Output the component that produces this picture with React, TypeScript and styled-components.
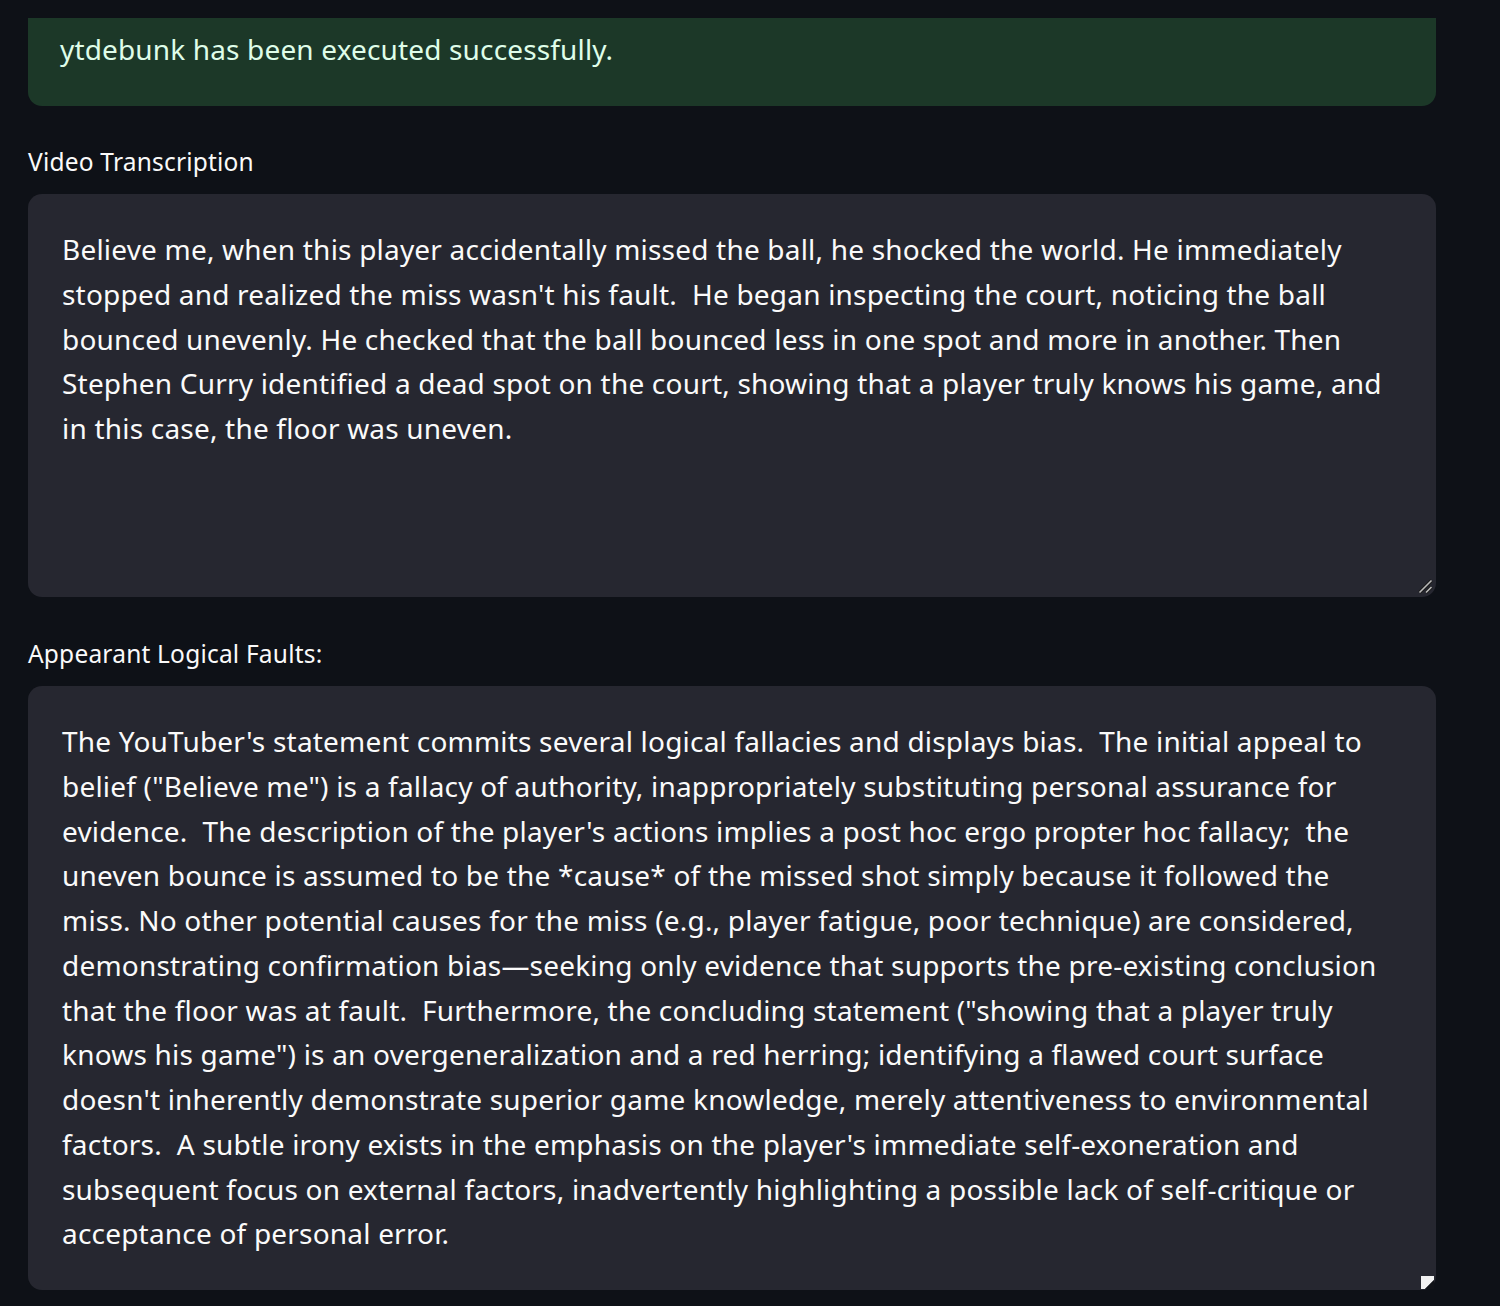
import React from "react";
import styled, { createGlobalStyle } from "styled-components";

const GlobalStyle = createGlobalStyle`
  html, body {
    margin: 0;
    padding: 0;
    background: #0e1117;
  }
  body {
    font-family: "Noto Sans", "Open Sans", sans-serif;
    color: #fafafa;
    -webkit-font-smoothing: antialiased;
  }
`;

const Page = styled.main`
  width: 1408px;
  padding: 18px 0 17px 28px;
  display: flex;
  flex-direction: column;
`;

const SuccessBox = styled.div`
  box-sizing: border-box;
  height: 88px;
  padding: 9px 32px 0 32px;
  background: #1c3828;
  color: #dffde9;
  border-radius: 0 0 14px 14px;
  font-size: 28px;
  line-height: 44.8px;
  letter-spacing: 0.15px;
`;

const Field = styled.section<{ $gap: number }>`
  display: flex;
  flex-direction: column;
  margin-top: ${(p) => p.$gap}px;
`;

const Label = styled.label`
  font-size: 24.5px;
  line-height: 32px;
  letter-spacing: 0.2px;
  color: #fafafa;
  margin-bottom: 16px;
`;

const TextArea = styled.div<{ $height?: number }>`
  position: relative;
  box-sizing: border-box;
  ${(p) => (p.$height ? `height: ${p.$height}px;` : "")}
  padding: 33px 32px 34px 34px;
  background: #262730;
  border-radius: 14px;
  font-size: 28px;
  line-height: 44.75px;
  letter-spacing: 0.2px;
  color: #fafafa;
`;

const Line = styled.div`
  white-space: pre;
`;

const Handle = styled.svg<{ $right: number; $bottom: number }>`
  position: absolute;
  right: ${(p) => p.$right}px;
  bottom: ${(p) => p.$bottom}px;
`;

const GripHandle = () => (
  <Handle width="15" height="15" viewBox="0 0 15 15" $right={3} $bottom={3}>
    <line x1="1.5" y1="13.5" x2="13.5" y2="1.5" stroke="#1a1a1a" strokeWidth="3.2" />
    <line x1="1.5" y1="13.5" x2="13.5" y2="1.5" stroke="#b9b9b9" strokeWidth="1.6" />
    <line x1="8" y1="13.5" x2="13.5" y2="8" stroke="#1a1a1a" strokeWidth="3.2" />
    <line x1="8" y1="13.5" x2="13.5" y2="8" stroke="#b9b9b9" strokeWidth="1.6" />
  </Handle>
);

const CornerHandle = () => (
  <Handle width="13" height="13" viewBox="0 0 13 13" $right={2} $bottom={1}>
    <polygon points="0,0 13,0 13,4 4,13 0,13" fill="#f2f2f2" />
    <polygon points="13,4 4,13 13,13" fill="#111318" />
  </Handle>
);

const transcription = [
  "Believe me, when this player accidentally missed the ball, he shocked the world. He immediately",
  "stopped and realized the miss wasn't his fault.  He began inspecting the court, noticing the ball",
  "bounced unevenly. He checked that the ball bounced less in one spot and more in another. Then",
  "Stephen Curry identified a dead spot on the court, showing that a player truly knows his game, and",
  "in this case, the floor was uneven.",
];

const faults = [
  "The YouTuber's statement commits several logical fallacies and displays bias.  The initial appeal to",
  'belief ("Believe me") is a fallacy of authority, inappropriately substituting personal assurance for',
  "evidence.  The description of the player's actions implies a post hoc ergo propter hoc fallacy;  the",
  "uneven bounce is assumed to be the *cause* of the missed shot simply because it followed the",
  "miss. No other potential causes for the miss (e.g., player fatigue, poor technique) are considered,",
  "demonstrating confirmation bias\u2014seeking only evidence that supports the pre-existing conclusion",
  'that the floor was at fault.  Furthermore, the concluding statement ("showing that a player truly',
  'knows his game") is an overgeneralization and a red herring; identifying a flawed court surface',
  "doesn't inherently demonstrate superior game knowledge, merely attentiveness to environmental",
  "factors.  A subtle irony exists in the emphasis on the player's immediate self-exoneration and",
  "subsequent focus on external factors, inadvertently highlighting a possible lack of self-critique or",
  "acceptance of personal error.",
];

export default function App() {
  return (
    <>
      <GlobalStyle />
      <Page>
        <SuccessBox>ytdebunk has been executed successfully.</SuccessBox>
        <Field $gap={40}>
          <Label>Video Transcription</Label>
          <TextArea $height={403}>
            {transcription.map((l, i) => (
              <Line key={i}>{l}</Line>
            ))}
            <GripHandle />
          </TextArea>
        </Field>
        <Field $gap={41}>
          <Label>Appearant Logical Faults:</Label>
          <TextArea>
            {faults.map((l, i) => (
              <Line key={i}>{l}</Line>
            ))}
            <CornerHandle />
          </TextArea>
        </Field>
      </Page>
    </>
  );
}
